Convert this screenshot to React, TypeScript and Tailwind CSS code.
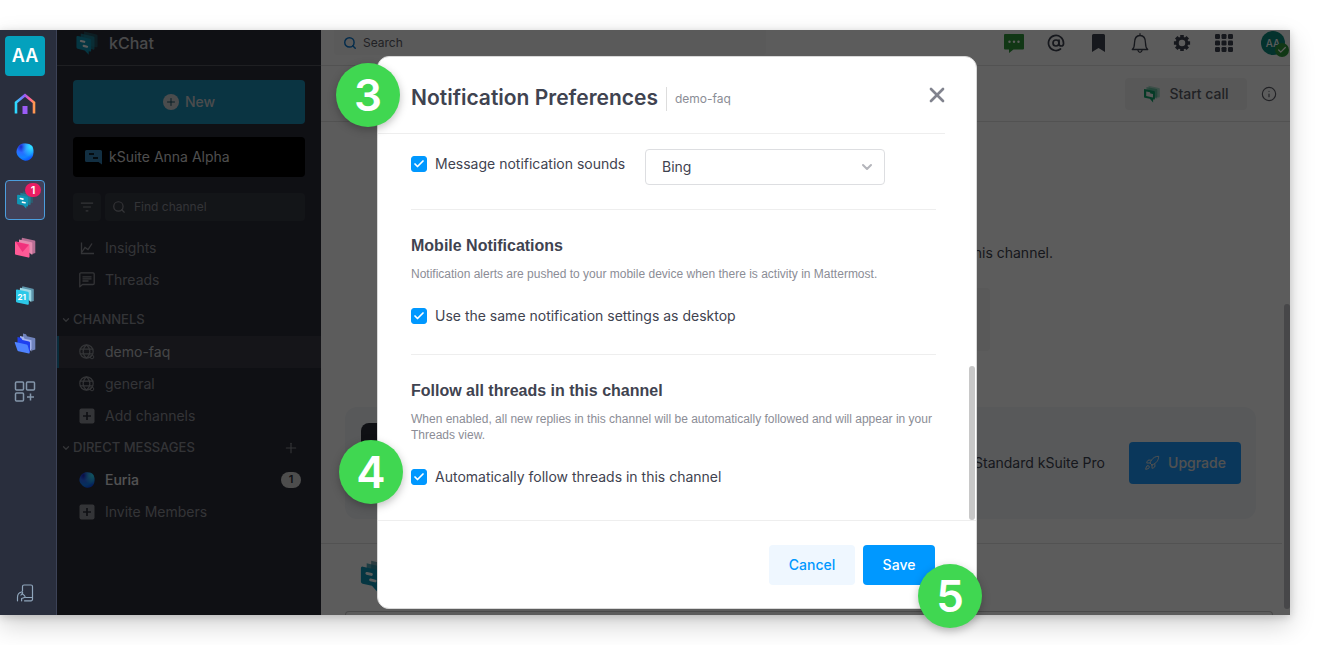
import cx from 'clsx';
import { AtSign, Check, ChevronDown, Info, Plus, Rocket, Search, X } from 'lucide-react';
import { ReactNode } from 'react';

const sans = "font-['Inter',sans-serif]";
const helvetica = "font-['Liberation_Sans',Arial,sans-serif]";

interface IconProps {
  className?: string;
}

const KChatLogo = ({ className }: IconProps) => (
  <svg viewBox="0 0 24 25" className={className} aria-hidden="true">
    <path d="M9 .5 21.800 3.600A1.500 1.500 0 0 1 23 5v10.500a1.300 1.300 0 0 1-1.600 1.300L9 14z" fill="#1f6f80" opacity=".6" />
    <path d="M5.500 2.500 18.600 5.600a1.500 1.500 0 0 1 1.200 1.500v11a1.300 1.300 0 0 1-1.600 1.300L5.500 16z" fill="#1b8ba3" opacity=".75" />
    <path
      d="M2.600 5.200 15 8a1.600 1.600 0 0 1 1.300 1.600v10.600a1.200 1.200 0 0 1-1.500 1.200l-1-.2v3.600L9.600 20.200 2.300 18.500A1.600 1.600 0 0 1 1 17V6.500a1.300 1.300 0 0 1 1.600-1.300z"
      fill="#0f96b6"
    />
    <path d="m5.600 10.400 3.600.9M8.500 15.500l3.600.9" stroke="#fff" strokeWidth="2.200" strokeLinecap="round" />
  </svg>
);

const KMeetLogo = ({ className }: IconProps) => (
  <svg viewBox="0 0 18 18" className={className} aria-hidden="true">
    <path d="M5.500.8 16 3a1 1 0 0 1 .8 1v7.500a1 1 0 0 1-1.200 1L5.500 10z" fill="#1fa878" opacity=".35" />
    <path d="M3.500 2 13.500 4a1 1 0 0 1 .8 1v8.500l-10.800-2z" fill="#1fa878" opacity=".5" />
    <path
      d="M1.500 4 11 6c.5.100.9.500.9 1v6.800c0 .6-.5 1-1.100.8l-.7-.1v3l-3.300-3.700-5-1.100c-.5-.1-.8-.5-.8-1V4.800c0-.5.200-.9.500-.8z"
      fill="#10a26a"
    />
    <path d="M3.200 6.500 7 7.300l.4 1.200 2.600.5v3.500l-6.800-1.500z" fill="#f4f4f4" />
  </svg>
);

const HomeIcon = ({ className }: IconProps) => (
  <svg viewBox="0 0 22 22" className={className} aria-hidden="true">
    <defs>
      <linearGradient id="home" x1="0" x2="1">
        <stop offset="0" stopColor="#2bdcff" />
        <stop offset=".45" stopColor="#8c5cff" />
        <stop offset=".75" stopColor="#ff5c9e" />
        <stop offset="1" stopColor="#ff9a4d" />
      </linearGradient>
    </defs>
    <path d="M2 20.500V9.500l9-7.300 9 7.300v11" fill="none" stroke="url(#home)" strokeWidth="2.600" />
    <path d="M8.500 13h5v8h-5z" fill="#9b5cf6" />
  </svg>
);

const EuriaIcon = ({ className }: IconProps) => (
  <svg viewBox="0 0 18 18" className={className} aria-hidden="true">
    <defs>
      <radialGradient id="euria" cx=".3" cy=".2" r=".9">
        <stop offset="0" stopColor="#1b1fc4" />
        <stop offset=".35" stopColor="#2a6bff" />
        <stop offset=".7" stopColor="#1183ff" />
        <stop offset="1" stopColor="#0a4dff" />
      </radialGradient>
      <radialGradient id="euriaGlow" cx=".85" cy=".2" r=".6">
        <stop offset="0" stopColor="#32e4ff" />
        <stop offset="1" stopColor="#32e4ff" stopOpacity="0" />
      </radialGradient>
    </defs>
    <path d="M6 .8C9 0 14 .3 16 3c1.800 2.500 2 8 .3 11-1.500 2.500-4.500 4-7.300 3.700C5.500 17.300.8 13 .5 9.500.3 6 2.500 1.800 6 .8z" fill="url(#euria)" />
    <path d="M6 .8C9 0 14 .3 16 3c1.800 2.500 2 8 .3 11-1.500 2.500-4.500 4-7.300 3.700C5.500 17.300.8 13 .5 9.500.3 6 2.500 1.800 6 .8z" fill="url(#euriaGlow)" />
  </svg>
);

const MailIcon = ({ className }: IconProps) => (
  <svg viewBox="0 0 22 22" className={className} aria-hidden="true">
    <path d="M8 .8 20.500 3.600a1 1 0 0 1 .8 1V16l-3 1L7 5z" fill="#b96f95" />
    <path d="m5 2.500 12.500 2.800a1 1 0 0 1 .8 1V18L5 8z" fill="#e58bb0" />
    <path d="m2 4.500 12.500 2.800a1.200 1.200 0 0 1 1 1.200v11.300c0 .6-.5 1-1.100.8L2 17.800a1.200 1.200 0 0 1-1-1.200V5.400C1 4.800 1.400 4.400 2 4.500z" fill="#ff5a96" />
    <path d="m1.500 4.700 13.500 3-6.500 7.300z" fill="#f0317c" />
  </svg>
);

const CalendarIcon = ({ className }: IconProps) => (
  <svg viewBox="0 0 20 20" className={className} aria-hidden="true">
    <path d="m7.500.3 10.500 2.400a1 1 0 0 1 .8 1V15l-2 .6L6.500 2.500z" fill="#5e95ab" />
    <path d="m5 1.800 10.500 2.300a1 1 0 0 1 .8 1v11.200L4.500 6z" fill="#9cd9e6" />
    <path d="m2.200 3.500 10.600 2.300a1.200 1.200 0 0 1 1 1.200v11c0 .6-.5 1-1.100.8L2 16.500a1.200 1.200 0 0 1-1-1.200v-11c0-.5.600-1 1.200-.8z" fill="#2cc8e8" />
    <text x="2.500" y="14.200" fontSize="8" fontWeight="700" fill="#fff" fontFamily="Inter, sans-serif">
      21
    </text>
  </svg>
);

const DriveIcon = ({ className }: IconProps) => (
  <svg viewBox="0 0 22 22" className={className} aria-hidden="true">
    <path d="m9 .5 3 .8 1 2 7.500 1.700a1 1 0 0 1 .8 1V16.500l-3 1L9 4.500z" fill="#7184bd" />
    <path d="m6 3 3.500.8 1 2 7 1.500V18.500L6 7.500z" fill="#a5b4ee" />
    <path d="m3.500 4 3.500.8 1.500 2.300 6.500 1.500c.6.100 1 .6 1 1.200V19.500L3.500 11.500z" fill="#1f3ff0" />
    <path d="m1.500 9 11 2.400c.6.100 1 .5 1.200 1.100l2 7.300c.1.500-.3.900-.8.800L4.500 18.200a1.500 1.500 0 0 1-1.100-1L.8 9.900c-.2-.5.200-1 .7-.9z" fill="#4f83ff" />
  </svg>
);

const AppsIcon = ({ className }: IconProps) => (
  <svg viewBox="0 0 22 22" className={className} fill="none" stroke="#8496ab" strokeWidth="1.500" aria-hidden="true">
    <rect x="1.500" y="1" width="8" height="8" rx="1" />
    <rect x="12.500" y="1" width="8" height="8" rx="1" />
    <rect x="1.500" y="12" width="8" height="8" rx="1" />
    <path d="M16.500 12.500v7M13 16h7" />
  </svg>
);

const PhoneHandIcon = ({ className }: IconProps) => (
  <svg
    viewBox="0 0 18 18"
    className={className}
    fill="none"
    stroke="#8fa5bb"
    strokeWidth="1.200"
    strokeLinecap="round"
    strokeLinejoin="round"
    aria-hidden="true"
  >
    <path d="M6.500 7V2.500A1.500 1.500 0 0 1 8 1h7a1.500 1.500 0 0 1 1.500 1.500v12.800a1.500 1.500 0 0 1-1.500 1.500H8.500M9.500 13.500h7" />
    <path d="M1.500 16.800v-3.500C1.500 10.500 3.500 8.500 5.500 8c1.200-.2 1.500.8.700 1.500L5 11M6.200 9.600l2.300 2c.9.800.6 1.900-.6 2.100l-2.300.8v2.300" />
  </svg>
);

const WorkspaceIcon = ({ className }: IconProps) => (
  <svg viewBox="0 0 18 16" className={className} aria-hidden="true">
    <path d="M1.500 1h14A1.500 1.500 0 0 1 17 2.500v13L13.500 13h-12A1.500 1.500 0 0 1 0 11.500v-9A1.500 1.500 0 0 1 1.500 1z" fill="#3484b8" />
    <path d="M4 5h5M8 9h5" stroke="#000" strokeWidth="1.500" />
  </svg>
);

const GlobeIcon = ({ className }: IconProps) => (
  <svg viewBox="0 0 16 16" className={className} fill="none" stroke="currentColor" strokeWidth="1.200" aria-hidden="true">
    <circle cx="7.500" cy="7.500" r="6.700" />
    <path d="M.8 5.200h13.400M.8 9.800h13.400M7.500.8c-4.500 4-4.500 9.400 0 13.400M7.500.8c4.500 4 4.500 9.400 0 13.400" />
    <circle cx="13" cy="13" r="1.800" strokeWidth="1" />
  </svg>
);

const PlusSquare = ({ className }: IconProps) => (
  <svg viewBox="0 0 16 16" className={className} aria-hidden="true">
    <rect x=".5" y=".5" width="15" height="15" rx="2" fill="currentColor" />
    <path d="M8 4v8M4 8h8" stroke="#2b2d38" strokeWidth="1.700" />
  </svg>
);

const ChartIcon = ({ className }: IconProps) => (
  <svg viewBox="0 0 14 14" className={className} fill="none" stroke="currentColor" strokeWidth="1.300" aria-hidden="true">
    <path d="M1.500 1.500v11H14M2 11l3-4.500 3 2 4-6" />
  </svg>
);

const ThreadsIcon = ({ className }: IconProps) => (
  <svg viewBox="0 0 16 16" className={className} fill="none" stroke="currentColor" strokeWidth="1.300" strokeLinejoin="round" aria-hidden="true">
    <path d="M.8 14.800V2A1.200 1.200 0 0 1 2 .8h12A1.200 1.200 0 0 1 15.200 2v9.300a1.200 1.200 0 0 1-1.200 1.200H3.500zM3.500 4.800h9M3.500 6.900h9M3.500 9h6" />
  </svg>
);

const FilterIcon = ({ className }: IconProps) => (
  <svg viewBox="0 0 16 12" className={className} fill="none" stroke="currentColor" strokeWidth="1.400" aria-hidden="true">
    <path d="M1 1.500h14M3.500 6h9M6.500 10.500h3" />
  </svg>
);

const BubbleIcon = ({ className }: IconProps) => (
  <svg viewBox="0 0 20 19" className={className} aria-hidden="true">
    <path d="M1 0h18a1 1 0 0 1 1 1v13.500a1 1 0 0 1-1 1H9.500L5 19v-3.500H1a1 1 0 0 1-1-1V1a1 1 0 0 1 1-1z" fill="#2f9a3b" />
    <g fill="#fff">
      <circle cx="5.500" cy="7.700" r="1.200" />
      <circle cx="10" cy="7.700" r="1.200" />
      <circle cx="14.500" cy="7.700" r="1.200" />
    </g>
  </svg>
);

const BookmarkIcon = ({ className }: IconProps) => (
  <svg viewBox="0 0 13 18" className={className} aria-hidden="true">
    <path d="M1.500 0h10A1.500 1.500 0 0 1 13 1.500V18l-6.500-4L0 18V1.500A1.500 1.500 0 0 1 1.500 0z" fill="currentColor" />
  </svg>
);

const BellIcon = ({ className }: IconProps) => (
  <svg viewBox="0 0 18 20" className={className} fill="none" stroke="currentColor" strokeWidth="1.300" strokeLinejoin="round" aria-hidden="true">
    <path d="M9 .3v2M1.300 16.500c1.700-1.500 2.200-3.500 2.200-6.500C3.500 5.500 5.500 2.500 9 2.500s5.500 3 5.500 7.500c0 3 .5 5 2.200 6.500zM6.800 17c.3 1.600 1 2.300 2.200 2.300s1.900-.7 2.200-2.300" />
  </svg>
);

const GearIcon = ({ className }: IconProps) => (
  <svg viewBox="0 0 20 20" className={className} aria-hidden="true">
    <circle cx="10" cy="10" r="5.300" fill="none" stroke="currentColor" strokeWidth="3.400" />
    <g stroke="currentColor" strokeWidth="4">
      <path d="M10 1v3M10 16v3M1 10h3M16 10h3M3.600 3.600l2.200 2.200M14.200 14.200l2.200 2.200M3.600 16.400l2.200-2.200M14.200 5.800l2.200-2.200" />
    </g>
  </svg>
);

const GridIcon = ({ className }: IconProps) => (
  <svg viewBox="0 0 18 18" className={className} fill="currentColor" aria-hidden="true">
    {[0, 6.500, 13].map(y => [0, 6.500, 13].map(x => <rect key={`${x}-${y}`} x={x} y={y} width="5" height="5" rx="1.200" />))}
  </svg>
);

const Rail = () => (
  <nav aria-label="Apps" className="flex w-[57px] shrink-0 flex-col gap-2 border-r border-[#3c4256] bg-[#292e3d] pt-1.5 pb-0.5 pl-[5px]">
    <button className="size-10 rounded bg-[#04a1bd] text-lg font-semibold text-white">AA</button>
    {[
      { name: 'Home', icon: <HomeIcon className="size-[22px]" /> },
      { name: 'Euria', icon: <EuriaIcon className="size-[18px]" /> },
      { name: 'kChat', icon: <KChatLogo className="size-[18px]" />, count: 1 },
      { name: 'Mail', icon: <MailIcon className="size-[22px]" /> },
      { name: 'Calendar', icon: <CalendarIcon className="size-5" /> },
      { name: 'kDrive', icon: <DriveIcon className="size-[22px]" /> },
      { name: 'All apps', icon: <AppsIcon className="size-[22px]" /> },
    ].map(({ name, icon, count }) => (
      <a
        href="#"
        key={name}
        aria-label={name}
        className={cx(
          'relative flex size-10 items-center justify-center rounded',
          count && 'border border-[#4c9ede] bg-[#414159]',
        )}
      >
        {icon}
        {count && (
          <span className="absolute top-0.5 right-[3px] flex h-3.5 w-4 items-center justify-center rounded-full bg-[#ea1d63] text-[11px] font-semibold text-white">
            {count}
          </span>
        )}
      </a>
    ))}
    <a href="#" aria-label="Mobile app" className="mt-auto flex size-10 items-center justify-center">
      <PhoneHandIcon className="size-[18px]" />
    </a>
  </nav>
);

interface RowProps {
  icon: ReactNode;
  label: string;
  active?: boolean;
  unread?: number;
}

const SidebarRow = ({ icon, label, active, unread }: RowProps) => (
  <a
    href="#"
    className={cx(
      'flex h-8 items-center gap-2.5 border-l-2 pr-5 pl-5 text-sm',
      active ? 'border-[#1a7aa5] bg-[#3a3c46] text-[#c0c1c5]' : 'border-transparent',
      unread ? 'font-medium text-[#e2e3e6]' : !active && 'text-[#8f9198]',
    )}
  >
    <span className="flex w-4 justify-center text-[#8f9198]">{icon}</span>
    <span>{label}</span>
    {unread && (
      <span className="ml-auto flex h-4 w-5 items-center justify-center rounded-full bg-[#d6d6d6] text-[11px] font-semibold text-[#2b2d38]">
        {unread}
      </span>
    )}
  </a>
);

const SidebarHeading = ({ children, action }: { children: string; action?: ReactNode }) => (
  <div className="flex h-8 items-center gap-0.5 pr-[22px] pl-1 text-[13px] font-medium text-[#8f9198]">
    <ChevronDown className="size-2.5" strokeWidth={3} />
    <h2>{children}</h2>
    {action}
  </div>
);

const Sidebar = () => (
  <aside className="flex w-66 shrink-0 flex-col bg-[#2b2d38]">
    <div className="flex h-9 items-center gap-2.5 border-b border-[#54565f] pb-2.5 pl-[18px]">
      <KChatLogo className="size-6" />
      <h1 className="text-base font-medium text-[#c8c9cc]">kChat</h1>
    </div>
    <div className="px-4 pt-3.5">
      <button className="flex h-11 w-full items-center justify-center gap-1.5 rounded bg-[#1c90b8] text-sm font-medium text-[#d0d3d6]">
        <span className="flex size-4 items-center justify-center rounded-full bg-[#d0d3d6]">
          <Plus className="size-3 text-[#1c5266]" strokeWidth={2} />
        </span>
        New
      </button>
      <button className="mt-[13px] flex h-10 w-full items-center gap-1.5 rounded bg-black px-3 text-sm text-[#d8d8d8]">
        <WorkspaceIcon className="h-4 w-[18px]" />
        kSuite Anna Alpha
      </button>
      <div className="mt-4 flex gap-1 text-[#8f9198]">
        <button aria-label="Filter" className="flex size-7 items-center justify-center rounded bg-[#373a44]">
          <FilterIcon className="h-3 w-3.5" />
        </button>
        <label className="flex h-7 flex-1 items-center gap-2 rounded bg-[#373a44] px-[7px]">
          <Search className="size-3.5 shrink-0" />
          <input aria-label="Find channel" placeholder="Find channel" className="w-full text-xs placeholder:text-[#8f9198]" />
        </label>
      </div>
    </div>
    <div className="mt-[11px] flex flex-col">
      <SidebarRow icon={<ChartIcon className="size-3.5" />} label="Insights" />
      <SidebarRow icon={<ThreadsIcon className="size-4" />} label="Threads" />
    </div>
    <div className="mt-2 flex flex-col">
      <SidebarHeading>CHANNELS</SidebarHeading>
      <SidebarRow icon={<GlobeIcon className="size-4" />} label="demo-faq" active />
      <SidebarRow icon={<GlobeIcon className="size-4" />} label="general" />
      <SidebarRow icon={<PlusSquare className="size-4" />} label="Add channels" />
      <SidebarHeading
        action={
          <button aria-label="New direct message" className="ml-auto">
            <Plus className="size-4" strokeWidth={1.700} />
          </button>
        }
      >
        DIRECT MESSAGES
      </SidebarHeading>
      <SidebarRow icon={<EuriaIcon className="size-4" />} label="Euria" unread={1} />
      <SidebarRow icon={<PlusSquare className="size-4" />} label="Invite Members" />
    </div>
  </aside>
);

const TopBar = () => (
  <header className="flex h-9 justify-between border-b border-[#e2e2e2] pl-[13px]">
    <label className="flex h-[25px] w-[432px] items-center gap-1.5 rounded-b bg-[#f8f8f8] px-[9px]">
      <Search className="size-3.5 shrink-0 text-[#0a78d0]" strokeWidth={2.500} />
      <input aria-label="Search" placeholder="Search" className="w-full text-xs placeholder:text-[#5c5d66]" />
    </label>
    <div className="flex h-[26px] shrink-0 items-center text-[#3f4350]">
      {[
        { name: 'Feedback', icon: <BubbleIcon className="h-[19px] w-5" /> },
        { name: 'Mentions', icon: <AtSign className="size-[18px]" strokeWidth={2.300} /> },
        { name: 'Saved', icon: <BookmarkIcon className="h-[18px] w-[13px]" /> },
        { name: 'Notifications', icon: <BellIcon className="h-5 w-[18px]" /> },
        { name: 'Settings', icon: <GearIcon className="size-[18px]" /> },
        { name: 'Products', icon: <GridIcon className="size-[18px]" /> },
      ].map(({ name, icon }) => (
        <button key={name} aria-label={name} className="flex w-[42px] justify-center">
          {icon}
        </button>
      ))}
      <button className="relative mr-[5px] ml-4 size-6 rounded-full bg-[#0c8a7c] text-[10px] font-medium text-white">
        AA
        <span className="absolute top-3 left-3.5 flex size-3.5 items-center justify-center rounded-full bg-[#2f9a3b]">
          <Check className="size-2.5 text-white" strokeWidth={3} />
        </span>
      </button>
    </div>
  </header>
);

const ChannelView = () => (
  <main className="flex min-w-0 flex-1 flex-col overflow-hidden bg-white">
    <TopBar />
    <div className="flex h-14 shrink-0 items-center justify-end gap-3.5 border-b border-[#e2e2e2] pr-[13px]">
      <button className="flex h-8 w-[122px] items-center justify-center gap-2 rounded bg-[#f4f4f4] text-sm font-medium text-[#5c5d66]">
        <KMeetLogo className="size-[18px]" />
        Start call
      </button>
      <button aria-label="Channel info" className="text-[#5c5d66]">
        <Info className="size-4" strokeWidth={1.700} />
      </button>
    </div>
    <div className="relative flex flex-1 flex-col">
      <p className="mt-[121px] mr-[237px] text-right text-sm/5 text-[#3f4350]">this channel.</p>
      <div className="mt-[25px] mr-[300px] ml-[57px] h-[63px] rounded bg-[#f5f5f5]" />
      <div className="mt-14 mr-[34px] ml-6 flex h-28 items-center justify-end gap-6 rounded-xl bg-[#f3f6fa] pr-[15px] pl-4">
        <div className="mr-auto size-20 rounded-lg bg-[#2b2d38]" />
        <p className="text-sm text-[#3f4350]">Standard kSuite Pro</p>
        <button className="flex h-[42px] w-28 items-center justify-center gap-2 rounded bg-[#1c9afc] text-sm font-medium text-[#e0e0e0]">
          <Rocket className="size-4" strokeWidth={1.500} />
          Upgrade
        </button>
      </div>
      <div className="mt-6 mr-2 flex-1 border-t border-[#e2e2e2] pt-4 pl-[38px]">
        <KChatLogo className="size-8" />
      </div>
      <div className="mr-[17px] ml-6 h-1 rounded-t border border-b-0 border-[#c9c9c9]" />
      <div className="absolute right-0 bottom-1.5 h-[305px] w-1.5 rounded-full bg-[#c4c4ca]" />
    </div>
  </main>
);

interface CheckRowProps {
  id: string;
  children: string;
}

const CheckRow = ({ id, children }: CheckRowProps) => (
  <div className="flex h-6 items-center gap-2">
    <span className="relative flex size-4">
      <input id={id} type="checkbox" defaultChecked className="size-4 appearance-none rounded-[3px] border border-[#c8ccd4] checked:border-[#0098ff] checked:bg-[#0098ff]" />
      <Check className="pointer-events-none absolute top-0.5 left-0.5 size-3 text-white" strokeWidth={3.500} />
    </span>
    <label htmlFor={id} className="text-sm text-[#3f4350]">
      {children}
    </label>
  </div>
);

interface SettingProps {
  title: string;
  description: string;
  children: ReactNode;
}

const Setting = ({ title, description, children }: SettingProps) => (
  <section className="border-t border-[#eeeeee] pt-[26px] pb-[26px]">
    <h3 className={cx(helvetica, 'text-base/5 font-bold text-[#3f4350]')}>{title}</h3>
    <p className={cx(helvetica, 'mt-2.5 mb-[22px] text-xs/4 text-[#8b8d96]')}>{description}</p>
    {children}
  </section>
);

const Step = ({ n, className }: { n: number; className: string }) => (
  <span
    className={cx(
      'absolute flex size-16 items-center justify-center rounded-full bg-[#40d751] text-[44px] font-semibold text-white shadow-[0_3px_8px_rgba(0,0,0,0.25)]',
      className,
    )}
  >
    {n}
  </span>
);

const PreferencesDialog = () => (
  <div
    role="dialog"
    aria-labelledby="preferences-title"
    className="relative flex w-[600px] flex-col rounded-xl border border-[#d8d8d8] bg-white text-[#3f4350]"
  >
    <header className="mr-[31px] flex h-[77px] items-start border-b border-[#eeeeee] pl-[33px]">
      <h2 id="preferences-title" className="mt-[25px] text-[21px]/8 font-semibold">
        Notification Preferences
      </h2>
      <span className="mt-[30px] ml-2 border-l border-[#dddddd] pl-2 text-xs/6 text-[#8b8d96]">demo-faq</span>
      <button aria-label="Close" className="mt-[26px] ml-auto text-[#81838e]">
        <X className="-mr-1 size-6" strokeWidth={2.700} />
      </button>
    </header>
    <div className="relative flex-1 pt-[15px] pr-10 pl-[33px]">
      <div className="mb-6 flex items-start">
        <div className="w-[234px] pt-[3px]">
          <CheckRow id="sounds">Message notification sounds</CheckRow>
        </div>
        <div className="relative">
          <select aria-label="Notification sound" className="h-9 w-60 appearance-none rounded border border-[#dddee1] px-4 text-sm">
            <option>Bing</option>
          </select>
          <ChevronDown className="pointer-events-none absolute top-2.5 right-2.5 size-4 text-[#b4b5bb]" strokeWidth={3} />
        </div>
      </div>
      <Setting
        title="Mobile Notifications"
        description="Notification alerts are pushed to your mobile device when there is activity in Mattermost."
      >
        <CheckRow id="same-as-desktop">Use the same notification settings as desktop</CheckRow>
      </Setting>
      <Setting
        title="Follow all threads in this channel"
        description="When enabled, all new replies in this channel will be automatically followed and will appear in your Threads view."
      >
        <CheckRow id="follow-threads">Automatically follow threads in this channel</CheckRow>
      </Setting>
      <div className="absolute right-px bottom-0 h-[154px] w-1.5 rounded-full bg-[#c8c8c8]" />
      <Step n={4} className="bottom-4 -left-[39px]" />
    </div>
    <footer className="flex h-[88px] justify-end gap-2 border-t border-[#eeeeee] pt-6 pr-[41px] text-sm font-medium">
      <button className="h-10 w-[86px] rounded bg-[#eff7ff] text-[#0098ff]">Cancel</button>
      <button className="h-10 w-[72px] rounded bg-[#0098ff] text-white">Save</button>
    </footer>
    <Step n={3} className="top-1.5 -left-[42px]" />
    <Step n={5} className="-right-1.5 -bottom-5" />
  </div>
);

export default function App() {
  return (
    <div className={cx('h-screen min-w-[1100px] bg-white py-[30px] pr-[30px]', sans)}>
      <div className="relative flex h-full shadow-[0_10px_24px_rgba(0,0,0,0.18),0_2px_8px_rgba(0,0,0,0.16)]">
        <Rail />
        <div className="relative flex min-w-0 flex-1">
          <Sidebar />
          <ChannelView />
          <div className="absolute inset-0 flex justify-center bg-black/64 pt-[26px] pb-1.5 pl-[7px]">
            <PreferencesDialog />
          </div>
        </div>
      </div>
    </div>
  );
}
